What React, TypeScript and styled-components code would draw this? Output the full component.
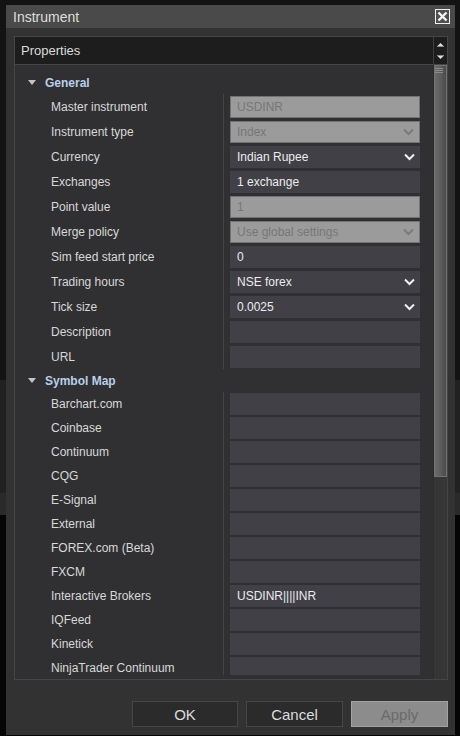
import React from 'react';
import styled, { createGlobalStyle } from 'styled-components';

const GlobalStyle = createGlobalStyle`
  html, body {
    margin: 0;
    padding: 0;
    background: #0c0c0c;
  }
  body {
    font-family: "Liberation Sans", Arial, sans-serif;
  }
  * {
    box-sizing: border-box;
  }
`;

const Screen = styled.div`
  width: 460px;
  height: 736px;
  padding: 5px 5px 1px 6px;
  overflow: hidden;
  background: linear-gradient(
    to bottom,
    #131313 0,
    #131313 380px,
    #212121 380px,
    #212121 493px,
    #2a2a2a 493px,
    #2a2a2a 515px,
    #050505 515px
  );
`;

const Window = styled.div`
  width: 449px;
  height: 730px;
  background: #323233;
  display: flex;
  flex-direction: column;
`;

const TitleBar = styled.div`
  height: 23px;
  flex: none;
  background: #4a4a4a;
  display: flex;
  align-items: center;
  justify-content: space-between;
  padding: 0 5px 0 7px;
`;

const Title = styled.span`
  font-size: 14px;
  color: #dedede;
`;

const CloseButton = styled.div`
  width: 15px;
  height: 15px;
  border: 1px solid #f0f0f0;
  background: #505050;
  display: flex;
  align-items: center;
  justify-content: center;
`;

const Body = styled.div`
  flex: 1;
  padding: 8px 7px 8px 8px;
  display: flex;
  flex-direction: column;
`;

const Panel = styled.div`
  height: 644px;
  border: 1px solid #454545;
  display: flex;
  flex-direction: column;
`;

const PanelHeader = styled.div`
  height: 28px;
  flex: none;
  background: #1d1d1d;
  border-bottom: 1px solid #464646;
  display: flex;
`;

const HeaderTitle = styled.div`
  flex: 1;
  padding-left: 6px;
  display: flex;
  align-items: center;
  font-size: 13px;
  color: #dcdcdc;
`;

const HeaderArrows = styled.div`
  width: 14px;
  border-left: 1px solid #3e3e3e;
  display: flex;
  flex-direction: column;
  align-items: center;
  justify-content: center;
  gap: 8px;
`;

const PanelContent = styled.div`
  flex: 1;
  min-height: 0;
  display: flex;
  background: #303032;
`;

const Viewport = styled.div`
  flex: 1;
  min-height: 0;
  padding: 6px 0 4px;
  display: flex;
  flex-direction: column;
`;

const Clip = styled.div`
  flex: 1;
  min-height: 0;
  overflow: hidden;
`;

const Category = styled.div`
  height: 23px;
  display: flex;
  align-items: center;
  padding-left: 13px;
  gap: 9px;
  font-size: 12px;
  font-weight: bold;
  color: #b9cfe8;
`;

const Row = styled.div<{ $height: number }>`
  height: ${(p) => p.$height}px;
  display: grid;
  grid-template-columns: 208px 1fr;
`;

const Label = styled.div`
  padding-left: 36px;
  display: flex;
  align-items: center;
  font-size: 12px;
  color: #d8d8d8;
  white-space: nowrap;
`;

const ValueCell = styled.div`
  border-left: 1px solid #454547;
  padding-left: 6px;
  display: flex;
  align-items: center;
`;

const Field = styled.div<{ $disabled?: boolean }>`
  width: 190px;
  height: 22px;
  padding: 0 5px 0 7px;
  display: flex;
  align-items: center;
  justify-content: space-between;
  font-size: 12px;
  background: ${(p) => (p.$disabled ? '#9b9b9b' : '#414047')};
  border: ${(p) => (p.$disabled ? '1px solid #727272' : 'none')};
  padding-left: ${(p) => (p.$disabled ? '6px' : '7px')};
  color: ${(p) => (p.$disabled ? '#777777' : '#ececec')};
  white-space: nowrap;
`;

const ScrollTrack = styled.div`
  width: 14px;
  flex: none;
  background: #363636;
  border-left: 1px solid #2c2c2c;
`;

const ScrollThumb = styled.div`
  height: 412px;
  border: 1px solid #727272;
  background: linear-gradient(to right, #6a6a6a 0, #5c5c5c 50%, #4b4b4b 100%);
  display: flex;
  flex-direction: column;
  align-items: flex-end;
  gap: 1px;
  padding: 2px 3px 0 0;
`;

const Grip = styled.div`
  width: 8px;
  height: 1px;
  background: #8a8a8a;
`;

const Footer = styled.div`
  margin-top: 21px;
  display: flex;
  justify-content: flex-end;
  gap: 8px;
`;

const Button = styled.div<{ $width: number; $disabled?: boolean }>`
  width: ${(p) => p.$width}px;
  height: 26px;
  display: flex;
  align-items: center;
  justify-content: center;
  font-size: 15px;
  border: 1px solid ${(p) => (p.$disabled ? '#a2a2a2' : '#464646')};
  background: ${(p) => (p.$disabled ? '#8c8c8c' : '#2b2b2b')};
  color: ${(p) => (p.$disabled ? '#6a6a6a' : '#dcdcdc')};
`;

const Chevron = ({ disabled }: { disabled?: boolean }) => (
  <svg width="11" height="8" viewBox="0 0 11 8">
    <path
      d="M1 1.5 L5.5 6 L10 1.5"
      fill="none"
      stroke={disabled ? '#7a7a7a' : '#f0f0f0'}
      strokeWidth="2"
    />
  </svg>
);

const Triangle = () => (
  <svg width="8" height="5" viewBox="0 0 8 5">
    <path d="M0 0 L8 0 L4 5 Z" fill="#c4c4c4" />
  </svg>
);

type Item = { label: string; value?: string; disabled?: boolean; select?: boolean };

const general: Item[] = [
  { label: 'Master instrument', value: 'USDINR', disabled: true },
  { label: 'Instrument type', value: 'Index', disabled: true, select: true },
  { label: 'Currency', value: 'Indian Rupee', select: true },
  { label: 'Exchanges', value: '1 exchange' },
  { label: 'Point value', value: '1', disabled: true },
  { label: 'Merge policy', value: 'Use global settings', disabled: true, select: true },
  { label: 'Sim feed start price', value: '0' },
  { label: 'Trading hours', value: 'NSE forex', select: true },
  { label: 'Tick size', value: '0.0025', select: true },
  { label: 'Description' },
  { label: 'URL' },
];

const symbolMap: Item[] = [
  { label: 'Barchart.com' },
  { label: 'Coinbase' },
  { label: 'Continuum' },
  { label: 'CQG' },
  { label: 'E-Signal' },
  { label: 'External' },
  { label: 'FOREX.com (Beta)' },
  { label: 'FXCM' },
  { label: 'Interactive Brokers', value: 'USDINR||||INR' },
  { label: 'IQFeed' },
  { label: 'Kinetick' },
  { label: 'NinjaTrader Continuum' },
];

function PropertyRow({ item, height }: { item: Item; height: number }) {
  return (
    <Row $height={height}>
      <Label>{item.label}</Label>
      <ValueCell>
        <Field $disabled={item.disabled}>
          <span>{item.value ?? ''}</span>
          {item.select && <Chevron disabled={item.disabled} />}
        </Field>
      </ValueCell>
    </Row>
  );
}

export default function App() {
  return (
    <Screen>
      <GlobalStyle />
      <Window>
        <TitleBar>
          <Title>Instrument</Title>
          <CloseButton>
            <svg width="11" height="11" viewBox="0 0 11 11">
              <path d="M1.5 1.5 L9.5 9.5 M9.5 1.5 L1.5 9.5" stroke="#f4f4f4" strokeWidth="2.4" />
            </svg>
          </CloseButton>
        </TitleBar>
        <Body>
          <Panel>
            <PanelHeader>
              <HeaderTitle>Properties</HeaderTitle>
              <HeaderArrows>
                <svg width="7" height="4" viewBox="0 0 7 4">
                  <path d="M0.5 3 L3.5 0 L6.5 3 Z" fill="#e0e0e0" />
                  <rect x="0" y="3" width="7" height="1" fill="#8a8a8a" />
                </svg>
                <svg width="7" height="4" viewBox="0 0 7 4">
                  <rect x="0" y="0" width="7" height="1" fill="#8a8a8a" />
                  <path d="M0.5 1 L6.5 1 L3.5 4 Z" fill="#e0e0e0" />
                </svg>
              </HeaderArrows>
            </PanelHeader>
            <PanelContent>
              <Viewport>
                <Clip>
                  <Category>
                    <Triangle />
                    General
                  </Category>
                  {general.map((item) => (
                    <PropertyRow key={item.label} item={item} height={25} />
                  ))}
                  <Category>
                    <Triangle />
                    Symbol Map
                  </Category>
                  {symbolMap.map((item) => (
                    <PropertyRow key={item.label} item={item} height={24} />
                  ))}
                </Clip>
              </Viewport>
              <ScrollTrack>
                <ScrollThumb>
                  <Grip />
                  <Grip />
                  <Grip />
                </ScrollThumb>
              </ScrollTrack>
            </PanelContent>
          </Panel>
          <Footer>
            <Button $width={106}>OK</Button>
            <Button $width={97}>Cancel</Button>
            <Button $width={97} $disabled>
              Apply
            </Button>
          </Footer>
        </Body>
      </Window>
    </Screen>
  );
}
